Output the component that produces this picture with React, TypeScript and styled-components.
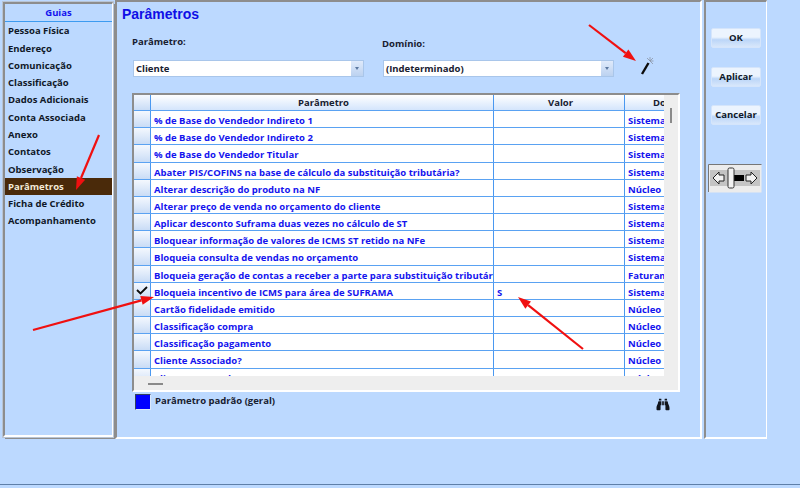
import React from "react";
import styled, { createGlobalStyle } from "styled-components";
import { FaBinoculars } from "react-icons/fa";

const Global = createGlobalStyle`
  html, body { margin: 0; padding: 0; background: #bcd9ff; }
  body { width: 800px; height: 488px; overflow: hidden; font-family: "Open Sans", "Liberation Sans", Arial, sans-serif; }
  * { box-sizing: border-box; }
`;

const Page = styled.div`
  position: relative;
  width: 800px;
  height: 488px;
  background: #bcd9ff;
  border-bottom: 3px solid #bcd9ff;
  box-shadow: inset 0 -1px 0 #5f7fa8;
  display: flex;
  align-items: flex-start;
  padding-left: 3px;
  font-size: 9.5px;
  font-weight: 700;
  letter-spacing: 0;
`;

const Panel = styled.div`
  border: 2px solid;
  border-color: #8d8d8d #ffffff #ffffff #8d8d8d;
  background: #bcd9ff;
`;

const Sidebar = styled(Panel)`
  width: 110px;
  height: 435px;
  margin-top: 2px;
  outline: 1px solid #b8c4d4;
  display: flex;
  flex-direction: column;
  border-width: 2px 1px 2px 2px;
  box-shadow: 1px 1px 0 #8d8d8d, 2px 2px 0 #8d8d8d;
`;

const SideHead = styled.div`
  height: 18.4px;
  line-height: 18px;
  text-align: center;
  color: #1414ee;
  border-bottom: 1px solid #3d9bf0;
`;

const SideItem = styled.div<{ $active?: boolean }>`
  height: 17.27px;
  line-height: 18px;
  padding-left: 3px;
  color: ${(p) => (p.$active ? "#f4ead8" : "#101828")};
  background: ${(p) => (p.$active ? "#4a2a0a" : "transparent")};
`;

const Main = styled(Panel)`
  width: 587px;
  height: 439px;
  margin-left: 2px;
  padding: 0 0 0 5px;
  display: flex;
  flex-direction: column;
  align-items: flex-start;
`;

const Title = styled.h1`
  margin: 2px 0 0;
  height: 20px;
  font-family: "Liberation Sans", Arial, sans-serif;
  font-size: 14px;
  line-height: 20px;
  color: #0f0fe6;
`;

const Filters = styled.div`
  display: flex;
  align-items: flex-start;
  margin: 11px 0 0 10px;
  height: 58px;
`;

const Field = styled.div<{ $w: number; $labelTop: number }>`
  width: ${(p) => p.$w}px;
  display: flex;
  flex-direction: column;
  padding-top: ${(p) => p.$labelTop}px;
  gap: ${(p) => 12 - p.$labelTop}px;
  color: #182030;
`;

const FieldLabel = styled.div`
  height: 13px;
  line-height: 13px;
`;

const Select = styled.div`
  height: 17px;
  width: 231px;
  margin-left: 1px;
  background: #fff;
  border: 1px solid #a9c6ea;
  display: flex;
  align-items: center;
  justify-content: space-between;
  padding-left: 2px;
  color: #182030;
`;

const SelectBtn = styled.div`
  width: 12px;
  height: 15px;
  background: linear-gradient(#dfeafb, #bcd2f0);
  display: flex;
  align-items: center;
  justify-content: center;
`;

const Caret = styled.span`
  width: 0;
  height: 0;
  border-left: 2.5px solid transparent;
  border-right: 2.5px solid transparent;
  border-top: 3px solid #5c78a0;
`;

const WandBox = styled.div`
  width: 14px;
  height: 20px;
  margin: 22px 0 0 28px;
`;

const Grid = styled.div`
  width: 548px;
  height: 299px;
  margin-left: 10px;
  background: #eeeeee;
  border: 2px solid;
  border-color: #8d8d8d #ffffff #ffffff #8d8d8d;
  display: grid;
  grid-template-columns: 530px 14px;
  grid-template-rows: 281px 14px;
  overflow: hidden;
`;

const Rows = styled.div`
  overflow: hidden;
  background: #fff;
`;

const Row = styled.div<{ $head?: boolean }>`
  display: grid;
  grid-template-columns: 16px 343px 131px 94px;
  height: ${(p) => (p.$head ? "16px" : "17.18px")};
  border-bottom: 1px solid #5aa2f2;
  color: #1414ee;
  line-height: ${(p) => (p.$head ? "15px" : "19px")};
  ${(p) =>
    p.$head
      ? `background: linear-gradient(#ffffff, #d4e5fc); color: #182030;`
      : ""}
`;

const Gutter = styled.div`
  background: linear-gradient(#f4f8fe, #c9dcf6);
  display: flex;
  align-items: center;
  justify-content: center;
`;

const Cell = styled.div<{ $center?: boolean }>`
  border-left: 1px solid #4a98f0;
  padding-left: 3px;
  white-space: nowrap;
  overflow: hidden;
  text-align: ${(p) => (p.$center ? "center" : "left")};
`;

const VScroll = styled.div`
  padding: 13px 0 0 6px;
`;

const VThumb = styled.div`
  width: 2px;
  height: 15px;
  background: #8a8a8a;
`;

const HScroll = styled.div`
  padding: 7px 0 0 14px;
`;

const HThumb = styled.div`
  width: 15px;
  height: 2px;
  background: #8a8a8a;
`;

const Foot = styled.div`
  width: 547px;
  margin: 2px 0 0 13px;
  display: flex;
  align-items: flex-start;
  color: #182030;
`;

const Swatch = styled.div`
  width: 16px;
  height: 16px;
  background: #0000ff;
  border: 1px solid;
  border-color: #33415c #dbe9fc #dbe9fc #33415c;
`;

const SwatchLabel = styled.div`
  margin-left: 4px;
  padding-top: 1px;
  line-height: 11px;
`;

const Finder = styled(FaBinoculars)`
  margin: 4px 12px 0 auto;
  width: 14px;
  height: 13px;
  color: #10141c;
`;

const Actions = styled(Panel)`
  width: 63px;
  height: 439px;
  margin-left: 2px;
  border-right-width: 1px;
  padding: 26px 0 0 5px;
  display: flex;
  flex-direction: column;
  align-items: flex-start;
`;

const Button = styled.div`
  width: 50px;
  height: 20px;
  margin-bottom: 18.5px;
  border-radius: 2px;
  border: 1px solid #d5e5fb;
  background: linear-gradient(#ecf4fe 0 45%, #bcd6f8 60%, #d8e7fb);
  color: #101828;
  text-align: center;
  line-height: 18px;
`;

const Slider = styled.svg`
  margin: 20px 0 0 -3px;
  display: block;
`;

const Overlay = styled.svg`
  position: absolute;
  left: 0;
  top: 0;
  pointer-events: none;
`;

const tabs = [
  "Pessoa Física", "Endereço", "Comunicação", "Classificação", "Dados Adicionais",
  "Conta Associada", "Anexo", "Contatos", "Observação", "Parâmetros",
  "Ficha de Crédito", "Acompanhamento",
];

const rows: [string, string, string, boolean?][] = [
  ["% de Base do Vendedor Indireto 1", "", "Sistema"],
  ["% de Base do Vendedor Indireto 2", "", "Sistema"],
  ["% de Base do Vendedor Titular", "", "Sistema"],
  ["Abater PIS/COFINS na base de cálculo da substituição tributária?", "", "Sistema"],
  ["Alterar descrição do produto na NF", "", "Núcleo Comum"],
  ["Alterar preço de venda no orçamento do cliente", "", "Sistema"],
  ["Aplicar desconto Suframa duas vezes no cálculo de ST", "", "Sistema"],
  ["Bloquear informação de valores de ICMS ST retido na NFe", "", "Sistema"],
  ["Bloqueia consulta de vendas no orçamento", "", "Sistema"],
  ["Bloqueia geração de contas a receber a parte para substituição tributária", "", "Faturamento"],
  ["Bloqueia incentivo de ICMS para área de SUFRAMA", "S", "Sistema", true],
  ["Cartão fidelidade emitido", "", "Núcleo Comum"],
  ["Classificação compra", "", "Núcleo Comum"],
  ["Classificação pagamento", "", "Núcleo Comum"],
  ["Cliente Associado?", "", "Núcleo Comum"],
  ["Cliente Pessoa do Bem?", "", "Núcleo Comum"],
];

const Arrow = ({ x1, y1, x2, y2 }: { x1: number; y1: number; x2: number; y2: number }) => {
  const a = Math.atan2(y2 - y1, x2 - x1);
  const len = 13;
  const w = 4.5;
  const bx = x2 - Math.cos(a) * len;
  const by = y2 - Math.sin(a) * len;
  const px = -Math.sin(a) * w;
  const py = Math.cos(a) * w;
  return (
    <g>
      <line x1={x1} y1={y1} x2={bx} y2={by} stroke="#f01010" strokeWidth={2.2} />
      <polygon points={`${x2},${y2} ${bx + px},${by + py} ${bx - px},${by - py}`} fill="#f01010" />
    </g>
  );
};

export default function App() {
  return (
    <>
      <Global />
      <Page>
        <Sidebar>
          <SideHead>Guias</SideHead>
          {tabs.map((t) => (
            <SideItem key={t} $active={t === "Parâmetros"}>{t}</SideItem>
          ))}
        </Sidebar>
        <Main>
          <Title>Parâmetros</Title>
          <Filters>
            <Field $w={250} $labelTop={0}>
              <FieldLabel>Parâmetro:</FieldLabel>
              <Select>Cliente<SelectBtn><Caret /></SelectBtn></Select>
            </Field>
            <Field $w={230} $labelTop={2}>
              <FieldLabel>Domínio:</FieldLabel>
              <Select>(Indeterminado)<SelectBtn><Caret /></SelectBtn></Select>
            </Field>
            <WandBox>
              <svg width="14" height="20" viewBox="0 0 14 20">
                <line x1="2" y1="17" x2="8.5" y2="6" stroke="#0c0c0c" strokeWidth="2.4" />
                <g stroke="#8a94a4" strokeWidth="0.8">
                  <line x1="10" y1="4" x2="10" y2="0" />
                  <line x1="10" y1="4" x2="13.5" y2="4" />
                  <line x1="10" y1="4" x2="7" y2="1" />
                  <line x1="10" y1="4" x2="13" y2="1" />
                  <line x1="10" y1="4" x2="13" y2="7" />
                </g>
              </svg>
            </WandBox>
          </Filters>
          <Grid>
            <Rows>
              <Row $head>
                <Gutter />
                <Cell $center>Parâmetro</Cell>
                <Cell $center>Valor</Cell>
                <Cell $center>Domínio</Cell>
              </Row>
              {rows.map(([name, value, domain, checked]) => (
                <Row key={name}>
                  <Gutter>
                    {checked && (
                      <svg width="12" height="9" viewBox="0 0 12 9">
                        <path d="M1 4 L4.5 7.5 L11 1" fill="none" stroke="#0c0c0c" strokeWidth="1.8" />
                      </svg>
                    )}
                  </Gutter>
                  <Cell>{name}</Cell>
                  <Cell>{value}</Cell>
                  <Cell>{domain}</Cell>
                </Row>
              ))}
            </Rows>
            <VScroll><VThumb /></VScroll>
            <HScroll><HThumb /></HScroll>
            <div />
          </Grid>
          <Foot>
            <Swatch />
            <SwatchLabel>Parâmetro padrão (geral)</SwatchLabel>
            <Finder />
          </Foot>
        </Main>
        <Actions>
          <Button>OK</Button>
          <Button>Aplicar</Button>
          <Button>Cancelar</Button>
          <Slider width="54" height="29" viewBox="0 0 54 29">
            <rect x="0.5" y="0.5" width="53" height="28" fill="#ececec" />
            <path d="M0.5 28V0.5H53.5" fill="none" stroke="#777" />
            <rect x="2" y="6" width="50" height="16" fill="#c4c4c4" />
            <rect x="22" y="11" width="14" height="6" fill="#000" />
            <rect x="20" y="4" width="6" height="20" rx="1.5" fill="#f2f2f2" stroke="#333" />
            <path d="M11 8 L5 14 L11 20 V17 H16 V11 H11 Z" fill="#f2f2f2" stroke="#222" />
            <path d="M43 8 L49 14 L43 20 V17 H38 V11 H43 Z" fill="#f2f2f2" stroke="#222" />
          </Slider>
        </Actions>
        <Overlay width="800" height="488" viewBox="0 0 800 488">
          <Arrow x1={99} y1={135} x2={76} y2={190} />
          <Arrow x1={33} y1={330} x2={154} y2={297} />
          <Arrow x1={589} y1={25} x2={636} y2={61} />
          <Arrow x1={583} y1={349} x2={518} y2={297} />
        </Overlay>
      </Page>
    </>
  );
}
